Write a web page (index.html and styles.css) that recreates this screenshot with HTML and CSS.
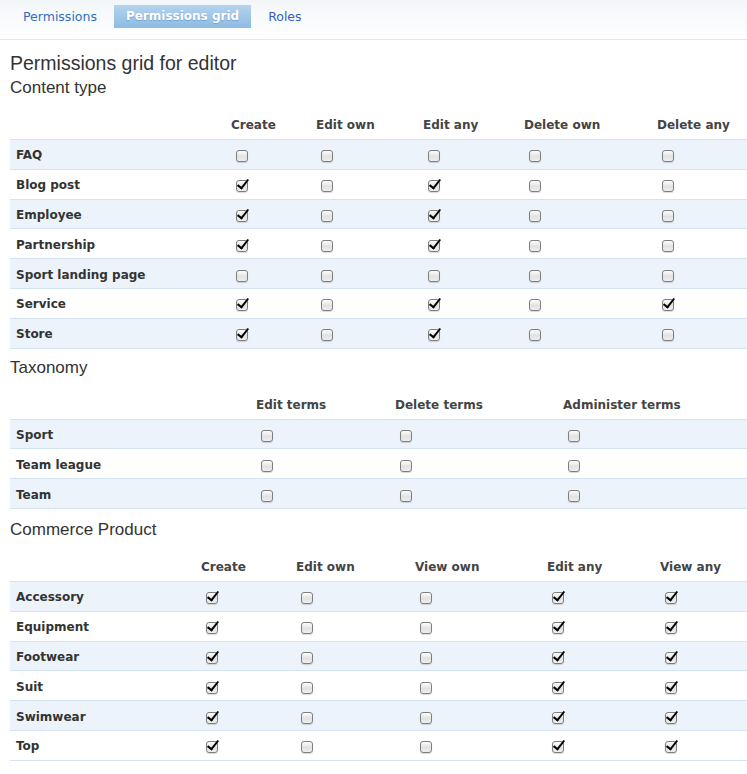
FILE: index.html
```html
<!DOCTYPE html>
<html>
<head>
<meta charset="utf-8">
<link rel="stylesheet" href="styles.css">
</head>
<body>
<nav class="tabs">
  <a class="tab" href="#">Permissions</a>
  <a class="tab active" href="#">Permissions grid</a>
  <a class="tab visited" href="#">Roles</a>
</nav>
<main class="content">
  <h1 class="title">Permissions grid for editor</h1>

  <h2 class="section">Content type</h2>
  <table class="grid grid-content">
    <colgroup><col class="c1"><col class="c2"><col class="c3"><col class="c4"><col class="c5"><col class="c6"></colgroup>
    <thead><tr><th></th><th>Create</th><th>Edit own</th><th>Edit any</th><th>Delete own</th><th>Delete any</th></tr></thead>
    <tbody>
      <tr><td class="label">FAQ</td><td><input type="checkbox"></td><td><input type="checkbox"></td><td><input type="checkbox"></td><td><input type="checkbox"></td><td><input type="checkbox"></td></tr>
      <tr><td class="label">Blog post</td><td><input type="checkbox" checked></td><td><input type="checkbox"></td><td><input type="checkbox" checked></td><td><input type="checkbox"></td><td><input type="checkbox"></td></tr>
      <tr><td class="label">Employee</td><td><input type="checkbox" checked></td><td><input type="checkbox"></td><td><input type="checkbox" checked></td><td><input type="checkbox"></td><td><input type="checkbox"></td></tr>
      <tr><td class="label">Partnership</td><td><input type="checkbox" checked></td><td><input type="checkbox"></td><td><input type="checkbox" checked></td><td><input type="checkbox"></td><td><input type="checkbox"></td></tr>
      <tr><td class="label">Sport landing page</td><td><input type="checkbox"></td><td><input type="checkbox"></td><td><input type="checkbox"></td><td><input type="checkbox"></td><td><input type="checkbox"></td></tr>
      <tr><td class="label">Service</td><td><input type="checkbox" checked></td><td><input type="checkbox"></td><td><input type="checkbox" checked></td><td><input type="checkbox"></td><td><input type="checkbox" checked></td></tr>
      <tr><td class="label">Store</td><td><input type="checkbox" checked></td><td><input type="checkbox"></td><td><input type="checkbox" checked></td><td><input type="checkbox"></td><td><input type="checkbox"></td></tr>
    </tbody>
  </table>

  <h2 class="section">Taxonomy</h2>
  <table class="grid grid-tax">
    <colgroup><col class="c1"><col class="c2"><col class="c3"><col class="c4"></colgroup>
    <thead><tr><th></th><th>Edit terms</th><th>Delete terms</th><th>Administer terms</th></tr></thead>
    <tbody>
      <tr><td class="label">Sport</td><td><input type="checkbox"></td><td><input type="checkbox"></td><td><input type="checkbox"></td></tr>
      <tr><td class="label">Team league</td><td><input type="checkbox"></td><td><input type="checkbox"></td><td><input type="checkbox"></td></tr>
      <tr><td class="label">Team</td><td><input type="checkbox"></td><td><input type="checkbox"></td><td><input type="checkbox"></td></tr>
    </tbody>
  </table>

  <h2 class="section section-commerce">Commerce Product</h2>
  <table class="grid grid-commerce">
    <colgroup><col class="c1"><col class="c2"><col class="c3"><col class="c4"><col class="c5"><col class="c6"></colgroup>
    <thead><tr><th></th><th>Create</th><th>Edit own</th><th>View own</th><th>Edit any</th><th>View any</th></tr></thead>
    <tbody>
      <tr><td class="label">Accessory</td><td><input type="checkbox" checked></td><td><input type="checkbox"></td><td><input type="checkbox"></td><td><input type="checkbox" checked></td><td><input type="checkbox" checked></td></tr>
      <tr><td class="label">Equipment</td><td><input type="checkbox" checked></td><td><input type="checkbox"></td><td><input type="checkbox"></td><td><input type="checkbox" checked></td><td><input type="checkbox" checked></td></tr>
      <tr><td class="label">Footwear</td><td><input type="checkbox" checked></td><td><input type="checkbox"></td><td><input type="checkbox"></td><td><input type="checkbox" checked></td><td><input type="checkbox" checked></td></tr>
      <tr><td class="label">Suit</td><td><input type="checkbox" checked></td><td><input type="checkbox"></td><td><input type="checkbox"></td><td><input type="checkbox" checked></td><td><input type="checkbox" checked></td></tr>
      <tr><td class="label">Swimwear</td><td><input type="checkbox" checked></td><td><input type="checkbox"></td><td><input type="checkbox"></td><td><input type="checkbox" checked></td><td><input type="checkbox" checked></td></tr>
      <tr><td class="label">Top</td><td><input type="checkbox" checked></td><td><input type="checkbox"></td><td><input type="checkbox"></td><td><input type="checkbox" checked></td><td><input type="checkbox" checked></td></tr>
    </tbody>
  </table>
</main>
</body>
</html>
```

FILE: styles.css
```css
html, body {
  margin: 0;
  padding: 0;
  background: #fff;
}

body {
  font-family: "DejaVu Sans", Verdana, sans-serif;
  color: #333;
}

.tabs {
  display: flex;
  align-items: center;
  gap: 5px;
  height: 40px;
  padding: 5px 0 11px 11px;
  box-sizing: border-box;
  background: linear-gradient(#f3f6f9, #ffffff);
  border-bottom: 1px solid #e6e6e6;
}

.tab {
  display: block;
  height: 23px;
  line-height: 23px;
  padding: 0 12px;
  font-size: 12.5px;
  text-decoration: none;
  color: #2a6ec2;
}

.tab.visited {
  color: #3a5cc2;
}

.tab.active {
  font-size: 12px;
  color: #fff;
  font-weight: bold;
  background: linear-gradient(#b4d3ee, #8dbbe3);
  text-shadow: 0 1px 1px rgba(70, 120, 170, 0.45);
}

.content {
  padding: 0 0 0 10px;
}

.title {
  margin: 11px 0 0;
  font-family: "Liberation Sans", Arial, sans-serif;
  font-size: 19.5px;
  line-height: 24px;
  font-weight: normal;
  color: #333;
}

.section {
  margin: 9px 0 0;
  font-family: "Liberation Sans", Arial, sans-serif;
  font-size: 17px;
  line-height: 20px;
  font-weight: normal;
  color: #333;
}

.title + .section {
  margin-top: 3px;
}

.section-commerce {
  margin-top: 11px;
}

.grid {
  width: 100%;
  table-layout: fixed;
  border-collapse: collapse;
  margin-top: 13px;
  font-size: 12px;
}

.grid th {
  height: 28px;
  padding: 0 6px;
  text-align: left;
  font-weight: bold;
  color: #444;
  border-bottom: 1px solid #d3e3f2;
  vertical-align: middle;
}

.grid td {
  height: 26.8px;
  padding: 2px 6px 0;
  border-bottom: 1px solid #d3e3f2;
  vertical-align: middle;
}

.grid tbody tr:nth-child(odd) {
  background: #ecf3fa;
}

.grid .label {
  font-weight: bold;
  color: #333;
}

.grid input[type="checkbox"] {
  appearance: none;
  -webkit-appearance: none;
  position: relative;
  display: block;
  width: 12px;
  height: 12px;
  margin: 2px 0 0 5px;
  box-sizing: border-box;
  border: 1px solid #7e7e7e;
  border-radius: 3px;
  background: linear-gradient(#fdfdfd, #e2e2e2 55%, #efefef);
  box-shadow: 0 1px 1px rgba(0, 0, 0, 0.15);
}

.grid input[type="checkbox"]:checked::after {
  content: "";
  position: absolute;
  left: 3px;
  top: -4px;
  width: 4px;
  height: 10px;
  border: solid #000;
  border-width: 0 2px 2px 0;
  transform: rotate(38deg);
}

.grid-content .c1 { width: 215px; }
.grid-content .c2 { width: 85px; }
.grid-content .c3 { width: 107px; }
.grid-content .c4 { width: 101px; }
.grid-content .c5 { width: 133px; }
.grid-content .c6 { width: 96px; }

.grid-tax .c1 { width: 240px; }
.grid-tax .c2 { width: 139px; }
.grid-tax .c3 { width: 168px; }
.grid-tax .c4 { width: 190px; }

.grid-commerce .c1 { width: 185px; }
.grid-commerce .c2 { width: 95px; }
.grid-commerce .c3 { width: 119px; }
.grid-commerce .c4 { width: 132px; }
.grid-commerce .c5 { width: 113px; }
.grid-commerce .c6 { width: 93px; }
```
